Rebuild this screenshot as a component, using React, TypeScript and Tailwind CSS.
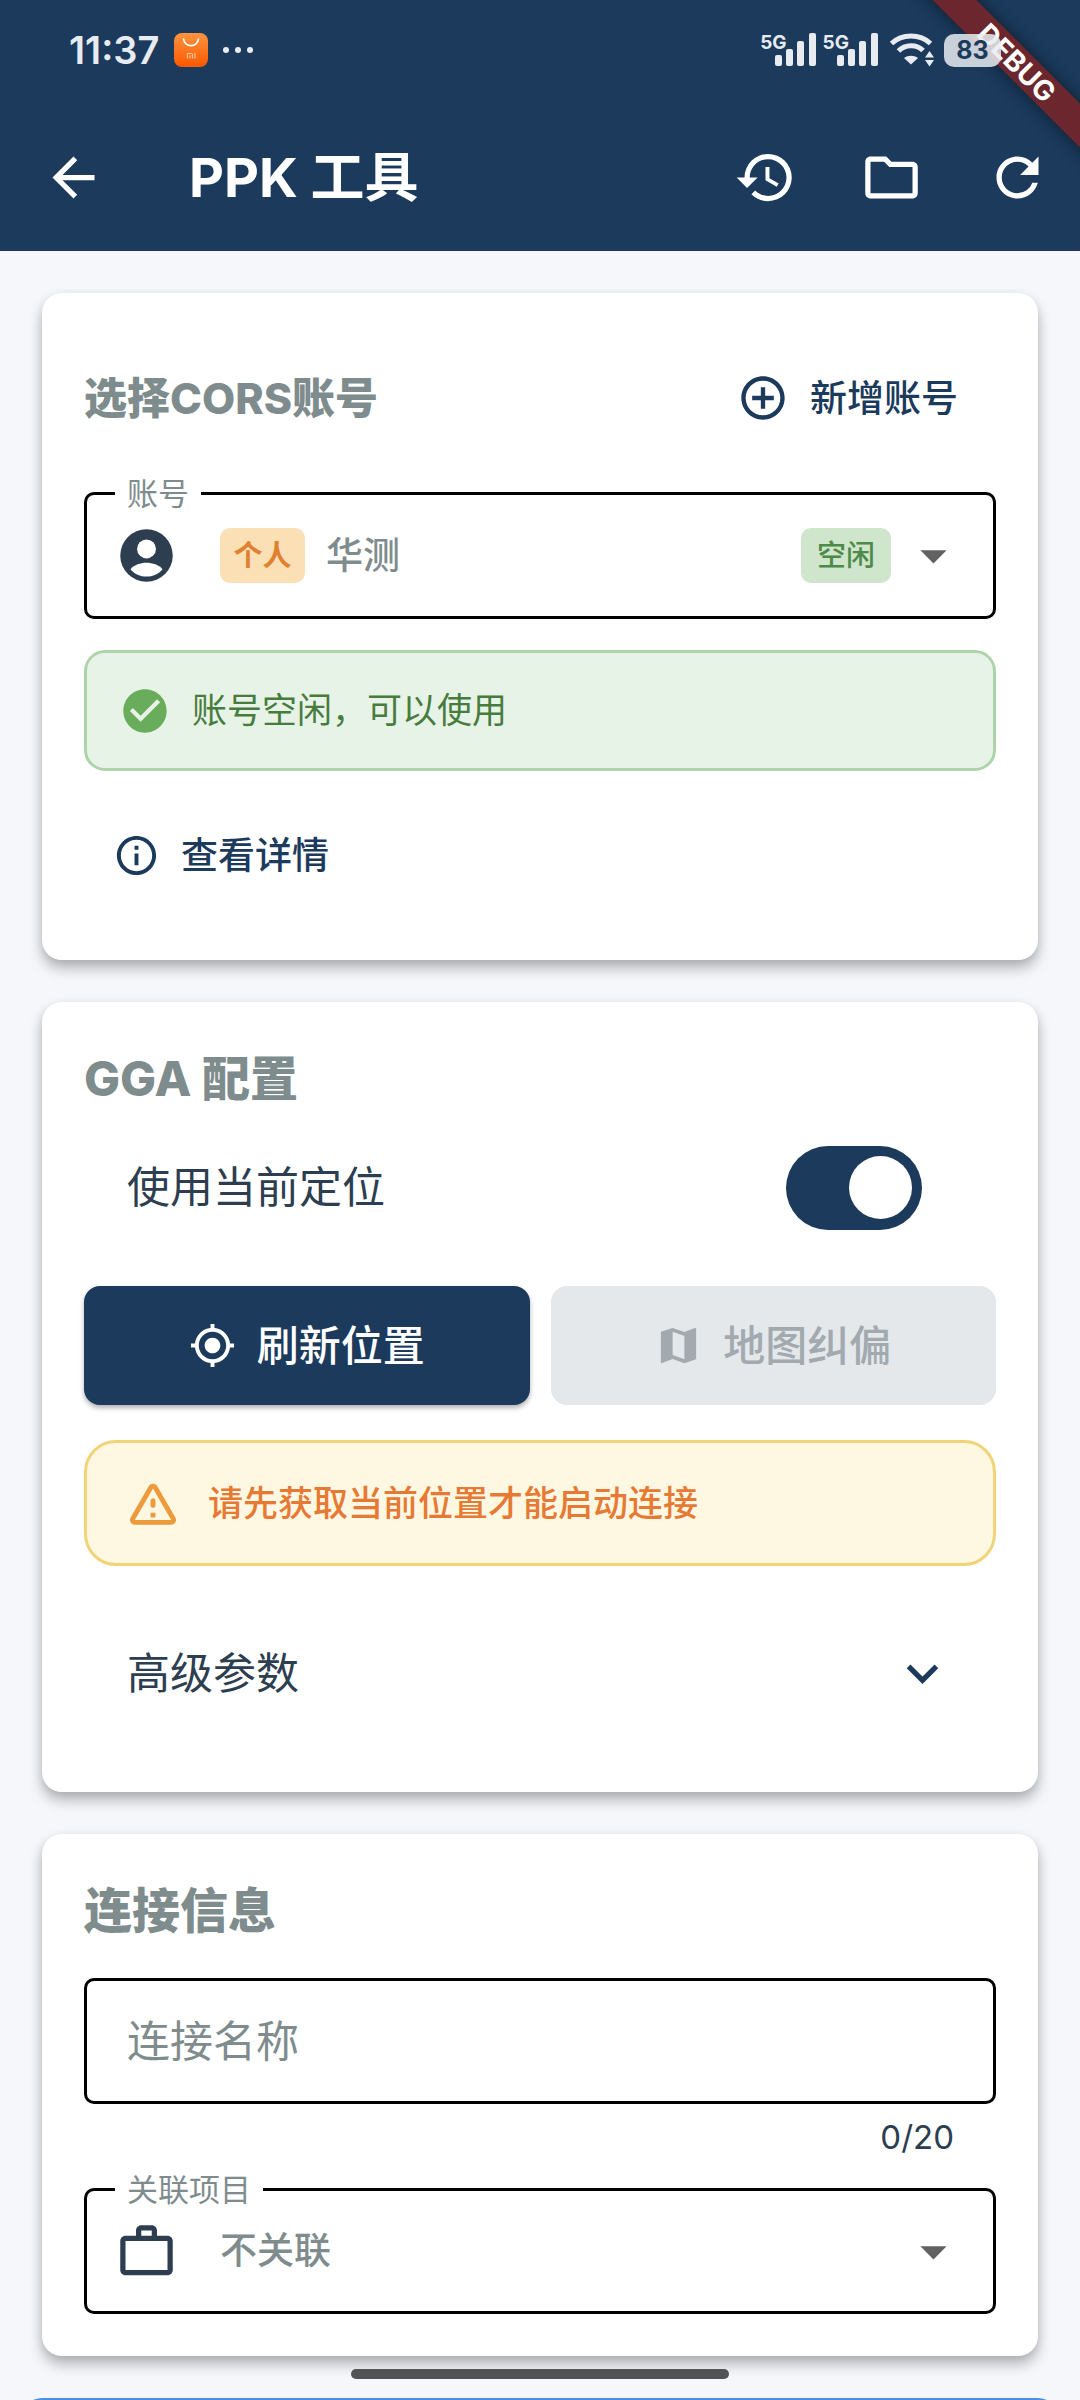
import type { ReactNode } from "react";
import {
  MdAddCircleOutline,
  MdArrowBack,
  MdArrowDropDown,
  MdCheckCircle,
  MdExpandMore,
  MdHistory,
  MdInfoOutline,
  MdMap,
  MdMyLocation,
  MdOutlineFolder,
  MdRefresh,
  MdWorkOutline,
} from "react-icons/md";

const actions = [
  { label: "历史", icon: MdHistory },
  { label: "文件", icon: MdOutlineFolder },
  { label: "刷新", icon: MdRefresh },
];

function Signal() {
  return (
    <div className="flex items-start">
      <span className="text-[19px] font-bold leading-none">5G</span>
      <svg viewBox="0 0 42 34" className="-ml-3 h-[34px] w-[42px]" fill="currentColor">
        <rect x="0" y="22" width="7" height="11" rx="2" />
        <rect x="11" y="16" width="7" height="17" rx="2" />
        <rect x="22" y="8" width="7" height="25" rx="2" />
        <rect x="34" y="0" width="7" height="33" rx="2" />
      </svg>
    </div>
  );
}

function WifiIcon() {
  return (
    <svg viewBox="0 0 46 34" className="h-[34px] w-[46px]" fill="none" stroke="currentColor">
      <path d="M2.5 10.5 C13 0.5 31 0.5 41.5 10.5" strokeWidth="5" />
      <path d="M9.5 18 C16 11 28 11 34 17.5" strokeWidth="5" />
      <path d="M15 25 C19 22 25 22 29 25 L22 31.5 Z" fill="currentColor" stroke="none" />
      <path d="M40.5 18 L45 24.5 H36 Z M40.5 33.5 L45 27 H36 Z" fill="currentColor" stroke="none" />
    </svg>
  );
}

function StoreIcon() {
  return (
    <svg viewBox="0 0 34 34" className="size-[34px]">
      <defs>
        <linearGradient id="store" x1="0" y1="0" x2="0" y2="1">
          <stop offset="0" stopColor="#ff9440" />
          <stop offset="1" stopColor="#ff5800" />
        </linearGradient>
      </defs>
      <rect width="34" height="34" rx="8" fill="url(#store)" />
      <path d="M9.5 5.5 C10 15 24 15 24.5 5.5" fill="none" stroke="#fff" strokeWidth="1.6" />
      <path d="M13.5 25.5 V20.5 H17 Q18.5 20.5 18.5 22 V25.5 M16 22.5 V25.5 M21 20 V25.5" fill="none" stroke="#ffc79a" strokeWidth="1.2" />
    </svg>
  );
}

function AccountIcon() {
  return (
    <svg viewBox="0 0 24 24" className="size-[63px] shrink-0 text-[#2c3e50]">
      <circle cx="12" cy="12" r="10" fill="currentColor" />
      <circle cx="12" cy="9.5" r="3.6" fill="#fff" />
      <path d="M5.9 17.2 C7.4 15.6 9.6 14.8 12 14.8 S16.6 15.6 18.1 17.2 C16.6 19.1 14.4 20 12 20 S7.4 19.1 5.9 17.2 Z" fill="#fff" />
    </svg>
  );
}

function WarningIcon() {
  return (
    <svg viewBox="0 0 24 24" className="size-[58px] shrink-0 text-[#ec9a3c]" fill="currentColor">
      <path d="M12 5.99L19.53 19H4.47L12 5.99M2.74 18c-.77 1.33.19 3 1.73 3h15.06c1.54 0 2.5-1.67 1.73-3L13.73 4.99c-.77-1.33-2.69-1.33-3.46 0L2.74 18zM11 11v2c0 .55.45 1 1 1s1-.45 1-1v-2c0-.55-.45-1-1-1s-1 .45-1 1zm0 5h2v2h-2z" />
    </svg>
  );
}

function StatusBar() {
  return (
    <div className="relative z-10 flex h-[104px] items-start justify-between pl-[69px] pr-[79px] pt-[33px] text-[#e8ecf1]">
      <div className="flex h-[34px] items-center gap-[15px]">
        <span className="text-[38px] font-semibold leading-none">11:37</span>
        <StoreIcon />
        <div className="flex gap-[6px]">
          <span className="size-[6px] rounded-full bg-current" />
          <span className="size-[6px] rounded-full bg-current" />
          <span className="size-[6px] rounded-full bg-current" />
        </div>
      </div>
      <div className="flex h-[34px] items-center">
        <div className="flex gap-[6px]">
          <Signal />
          <Signal />
        </div>
        <div className="ml-[10px]">
          <WifiIcon />
        </div>
        <div className="ml-[9px] flex h-[33px] w-[57px] items-center justify-center rounded-[10px] bg-[#e8ecf1]/85 text-[25px] font-bold leading-none text-[#1b3a5c]">
          83
        </div>
      </div>
    </div>
  );
}

function Header() {
  return (
    <header className="shrink-0 bg-[#1b3a5c] text-white">
      <StatusBar />
      <div className="flex h-[147px] items-center">
        <button aria-label="返回" className="flex h-[126px] w-[147px] items-center justify-center">
          <MdArrowBack className="size-[63px]" />
        </button>
        <h1 className="flex-1 pl-[42px] text-[54px] font-bold leading-none">PPK 工具</h1>
        {actions.map(({ label, icon: Icon }) => (
          <button key={label} aria-label={label} className="flex size-[126px] items-center justify-center">
            <Icon className="size-[63px]" />
          </button>
        ))}
      </div>
    </header>
  );
}

function Card({ children }: { children: ReactNode }) {
  return (
    <section className="rounded-[20px] bg-white p-[42px] shadow-[0_8px_14px_rgba(0,0,0,0.28),0_2px_8px_rgba(0,0,0,0.06)]">
      {children}
    </section>
  );
}

function FloatingLabel({ htmlFor, children }: { htmlFor: string; children: ReactNode }) {
  return (
    <label
      htmlFor={htmlFor}
      className="absolute -top-[19px] left-7 bg-white px-3 text-[31px] leading-9 text-[#7f8c8d]"
    >
      {children}
    </label>
  );
}

function AccountCard() {
  return (
    <Card>
      <div className="flex h-[126px] items-center justify-between">
        <h2 className="text-[43px] font-extrabold leading-none text-[#7f8c8d]">选择CORS账号</h2>
        <button className="flex h-full items-center gap-[21px] pr-[38px] text-[37px] font-medium leading-none text-[#1b3a5c]">
          <MdAddCircleOutline className="size-[52px]" />
          新增账号
        </button>
      </div>

      <div className="relative mt-[31px] flex h-[127px] items-center rounded-[10px] border-[3px] border-black px-7">
        <FloatingLabel htmlFor="account">账号</FloatingLabel>
        <AccountIcon />
        <span className="ml-[42px] flex h-[55px] w-[85px] items-center justify-center rounded-[10px] bg-[#fbe0b6] text-[29px] font-semibold leading-none text-[#e08030]">
          个人
        </span>
        <select
          id="account"
          className="ml-[21px] h-full min-w-0 flex-1 appearance-none bg-transparent text-[37px] font-medium text-[#7f8c8d] outline-none"
        >
          <option>华测</option>
        </select>
        <span className="mr-[11px] flex h-[55px] w-[90px] items-center justify-center rounded-[10px] bg-[#cfe5cc] text-[29px] font-medium leading-none text-[#4d8a48]">
          空闲
        </span>
        <MdArrowDropDown className="size-[63px] text-[#616161]" />
      </div>

      <div className="mt-[31px] flex h-[121px] items-center gap-[21px] rounded-[21px] border-[3px] border-[#aed4ab] bg-[#e8f3e7] px-8 text-[35px] leading-none text-[#477c3e]">
        <MdCheckCircle className="size-[52px] text-[#68ac5c]" />
        账号空闲，可以使用
      </div>

      <button className="mt-[21px] flex h-[126px] items-center gap-[21px] pl-[29px] text-[37px] font-medium leading-none text-[#1b3a5c]">
        <MdInfoOutline className="size-[47px]" />
        查看详情
      </button>
    </Card>
  );
}

function GgaCard() {
  return (
    <Card>
      <h2 className="text-[48px] font-extrabold leading-[70px] text-[#7f8c8d]">GGA 配置</h2>

      <label className="flex h-[147px] items-center justify-between pl-[43px] pr-[74px] text-[43px] leading-none text-[#2c3e50]">
        使用当前定位
        <input
          type="checkbox"
          role="switch"
          defaultChecked
          className="flex h-[84px] w-[136px] appearance-none items-center justify-start rounded-full bg-[#b0b8bf] px-[10px] before:size-[63px] before:rounded-full before:bg-white checked:justify-end checked:bg-[#1b3a5c]"
        />
      </label>

      <div className="mt-[25px] grid grid-cols-2 gap-[21px] text-[42px] font-medium leading-none">
        <button className="flex h-[119px] items-center justify-center gap-[21px] rounded-2xl bg-[#1b3a5c] text-white shadow-[0_3px_5px_rgba(0,0,0,0.3)]">
          <MdMyLocation className="size-[47px]" />
          刷新位置
        </button>
        <button
          disabled
          className="flex h-[119px] items-center justify-center gap-[21px] rounded-2xl bg-[#e4e8eb] text-[#a2aaaf]"
        >
          <MdMap className="size-[47px]" />
          地图纠偏
        </button>
      </div>

      <div className="mt-[35px] flex h-[126px] items-center gap-[26px] rounded-[32px] border-[3px] border-[#f1d477] bg-[#fef7e1] px-[37px] text-[35px] font-medium leading-none text-[#e67a35]">
        <WarningIcon />
        请先获取当前位置才能启动连接
      </div>

      <button className="mt-[31px] flex h-[153px] w-full items-center justify-between pl-[43px] pr-[42px] text-[43px] leading-none text-[#2c3e50]">
        高级参数
        <MdExpandMore className="size-[63px] text-[#1b3a5c]" />
      </button>
    </Card>
  );
}

function ConnectionCard() {
  return (
    <Card>
      <h2 className="text-[48px] font-extrabold leading-[70px] text-[#7f8c8d]">连接信息</h2>

      <input
        type="text"
        aria-label="连接名称"
        placeholder="连接名称"
        maxLength={20}
        className="mt-8 block h-[126px] w-full rounded-[10px] border-[3px] border-black px-10 text-[43px] text-[#2c3e50] outline-none placeholder:text-[#7f8c8d]"
      />
      <p className="pr-[42px] text-right text-[33px] leading-[66px] text-[#2c3e50]">0/20</p>

      <div className="relative mt-[18px] flex h-[126px] items-center rounded-[10px] border-[3px] border-black px-7">
        <FloatingLabel htmlFor="project">关联项目</FloatingLabel>
        <MdWorkOutline className="size-[63px] text-[#2c3e50]" />
        <select
          id="project"
          className="ml-[42px] h-full min-w-0 flex-1 appearance-none bg-transparent text-[37px] font-medium text-[#7f8c8d] outline-none"
        >
          <option>不关联</option>
        </select>
        <MdArrowDropDown className="size-[63px] text-[#616161]" />
      </div>
    </Card>
  );
}

export default function App() {
  return (
    <div className="relative flex h-screen flex-col overflow-hidden bg-[#f5f7fb] font-['Inter','Noto_Sans_CJK_SC',sans-serif]">
      <Header />
      <main className="flex flex-col gap-[42px] px-[42px] pt-[42px]">
        <AccountCard />
        <GgaCard />
        <ConnectionCard />
        <div className="-mx-5 h-[126px] shrink-0 rounded-[20px] bg-[#4a90e2]" />
      </main>

      {/* system gesture bar */}
      <div className="absolute bottom-[21px] left-1/2 h-[10px] w-[378px] -translate-x-1/2 rounded-full bg-[#525354]" />

      {/* debug ribbon */}
      <div className="absolute -right-[87px] top-[47px] flex h-[31px] w-[300px] rotate-45 items-center justify-center bg-[#6b272d] text-[28px] font-bold leading-none text-white shadow-[0_0_16px_rgba(0,0,0,0.5)]">
        DEBUG
      </div>
    </div>
  );
}
